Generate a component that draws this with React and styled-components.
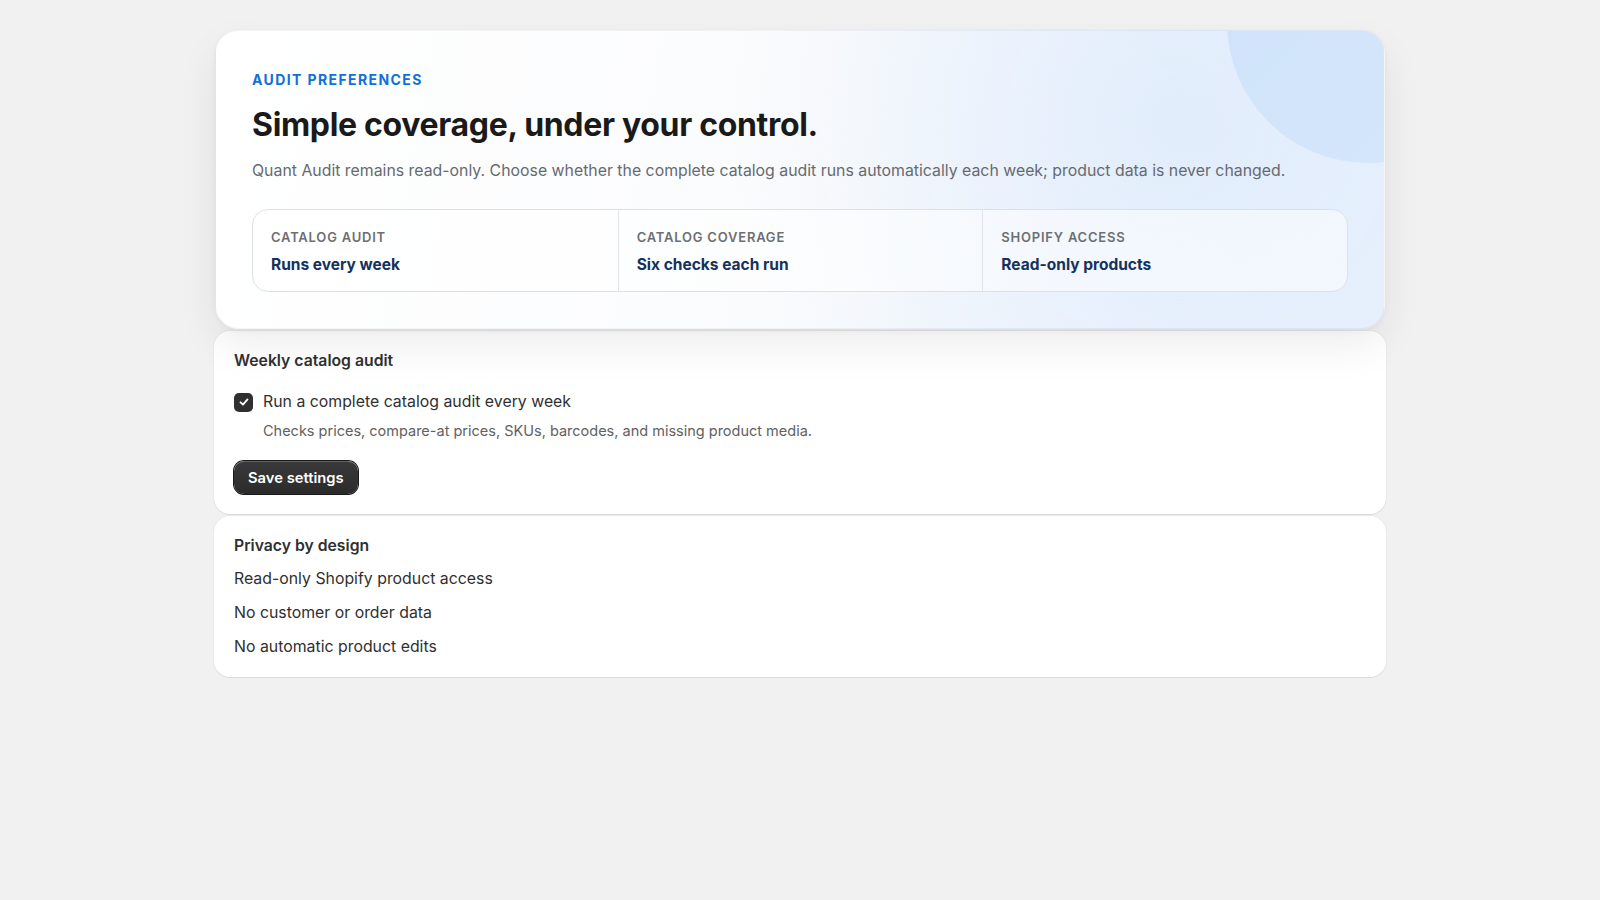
import React from 'react';
import styled, { createGlobalStyle } from 'styled-components';

const GlobalStyle = createGlobalStyle`
  * { box-sizing: border-box; }
  body {
    margin: 0;
    background: #f1f1f1;
    font-family: Inter, "Noto Sans", "Liberation Sans", sans-serif;
    color: #303030;
  }
`;

const Page = styled.div`
  width: 1172px;
  margin: 0 auto;
  padding: 30px 0;
  display: flex;
  flex-direction: column;
  gap: 2px;
`;

const Hero = styled.section`
  position: relative;
  z-index: 1;
  margin: 0 1px;
  overflow: hidden;
  border-radius: 24px;
  padding: 40px 36px 36px;
  border: 1px solid rgba(0, 0, 0, 0.04);
  background:
    radial-gradient(circle at 82% 30%, rgba(214, 230, 250, 0.5) 0%, rgba(214, 230, 250, 0) 45%),
    linear-gradient(100deg, #ffffff 0%, #fafbfd 50%, #eef4fd 78%, #e9f1fd 100%);
  box-shadow: 0 18px 40px rgba(0, 0, 0, 0.07), 0 2px 6px rgba(0, 0, 0, 0.04);
`;

const Bubble = styled.div`
  position: absolute;
  top: -150px;
  right: -125px;
  width: 282px;
  height: 282px;
  border-radius: 50%;
  background: linear-gradient(135deg, #cde2fa 0%, #d6e7fb 100%);
`;

const HeroBody = styled.div`
  position: relative;
`;

const Eyebrow = styled.div`
  font-size: 14px;
  line-height: 17px;
  font-weight: 700;
  letter-spacing: 0.1em;
  color: #1170d6;
  text-transform: uppercase;
`;

const Title = styled.h1`
  margin: 18px 0 0;
  font-size: 32px;
  line-height: 38px;
  font-weight: 700;
  letter-spacing: -0.01em;
  color: #1a1a1a;
`;

const Lead = styled.p`
  margin: 15px 0 0;
  font-size: 15.85px;
  line-height: 24px;
  color: #666a70;
`;

const Stats = styled.div`
  margin-top: 26px;
  display: grid;
  grid-template-columns: repeat(3, 1fr);
  border: 1px solid #dde1e7;
  border-radius: 16px;
  background: rgba(255, 255, 255, 0.5);
`;

const Stat = styled.div`
  padding: 18px 18px 16px;
  border-left: ${(p) => (p.first ? 'none' : '1px solid #e2e5ea')};
  display: flex;
  flex-direction: column;
  gap: 9px;
`;

const StatLabel = styled.div`
  font-size: 13px;
  line-height: 18px;
  font-weight: 600;
  letter-spacing: 0.06em;
  color: #6d6f73;
  text-transform: uppercase;
`;

const StatValue = styled.div`
  font-size: 15.5px;
  line-height: 20px;
  font-weight: 700;
  color: #14325c;
`;

const Card = styled.section`
  background: #ffffff;
  border-radius: 16px;
  padding: 20px;
  box-shadow: 0 1px 0 rgba(26, 26, 26, 0.07), 0 0 0 1px rgba(0, 0, 0, 0.03);
  display: flex;
  flex-direction: column;
`;

const CardTitle = styled.h2`
  margin: 0;
  font-size: 15.75px;
  line-height: 20px;
  font-weight: 600;
  color: #303030;
`;

const CheckRow = styled.label`
  margin-top: 20px;
  display: flex;
  align-items: center;
  gap: 10px;
  font-size: 15.85px;
  line-height: 22px;
  color: #303030;
  cursor: pointer;
`;

const Box = styled.span`
  width: 19px;
  height: 19px;
  border-radius: 5px;
  background: #303030;
  display: inline-flex;
  align-items: center;
  justify-content: center;
  flex: none;
`;

const Help = styled.div`
  margin: 8px 0 0 29px;
  font-size: 14.5px;
  line-height: 20px;
  color: #616161;
`;

const SaveButton = styled.button`
  margin-top: 20px;
  align-self: flex-start;
  height: 33px;
  padding: 0 14px;
  border: none;
  border-radius: 10px;
  background: linear-gradient(180deg, #3a3a3a 0%, #2b2b2b 100%);
  color: #ffffff;
  font-family: inherit;
  font-size: 14.75px;
  font-weight: 600;
  box-shadow: 0 0 0 1px #1a1a1a, inset 0 1px 0 rgba(255, 255, 255, 0.2), 0 1px 0 rgba(0, 0, 0, 0.4);
  cursor: pointer;
`;

const List = styled.ul`
  margin: 13px 0 0;
  padding: 0;
  list-style: none;
  display: flex;
  flex-direction: column;
  gap: 14px;
`;

const Item = styled.li`
  font-size: 15.85px;
  line-height: 20px;
  color: #303030;
`;

const stats = [
  { label: 'Catalog audit', value: 'Runs every week' },
  { label: 'Catalog coverage', value: 'Six checks each run' },
  { label: 'Shopify access', value: 'Read-only products' },
];

const privacy = [
  'Read-only Shopify product access',
  'No customer or order data',
  'No automatic product edits',
];

export default function App() {
  return (
    <>
      <GlobalStyle />
      <Page>
        <Hero>
          <Bubble />
          <HeroBody>
            <Eyebrow>Audit preferences</Eyebrow>
            <Title>Simple coverage, under your control.</Title>
            <Lead>
              Quant Audit remains read-only. Choose whether the complete catalog audit runs
              automatically each week; product data is never changed.
            </Lead>
            <Stats>
              {stats.map((s, i) => (
                <Stat key={s.label} first={i === 0}>
                  <StatLabel>{s.label}</StatLabel>
                  <StatValue>{s.value}</StatValue>
                </Stat>
              ))}
            </Stats>
          </HeroBody>
        </Hero>

        <Card>
          <CardTitle>Weekly catalog audit</CardTitle>
          <CheckRow>
            <Box>
              <svg width="12" height="12" viewBox="0 0 12 12" fill="none">
                <path d="M2.5 6.3L5 8.6L9.5 3.4" stroke="#fff" strokeWidth="1.8" strokeLinecap="round" strokeLinejoin="round" />
              </svg>
            </Box>
            Run a complete catalog audit every week
          </CheckRow>
          <Help>Checks prices, compare-at prices, SKUs, barcodes, and missing product media.</Help>
          <SaveButton>Save settings</SaveButton>
        </Card>

        <Card>
          <CardTitle>Privacy by design</CardTitle>
          <List>
            {privacy.map((p) => (
              <Item key={p}>{p}</Item>
            ))}
          </List>
        </Card>
      </Page>
    </>
  );
}
